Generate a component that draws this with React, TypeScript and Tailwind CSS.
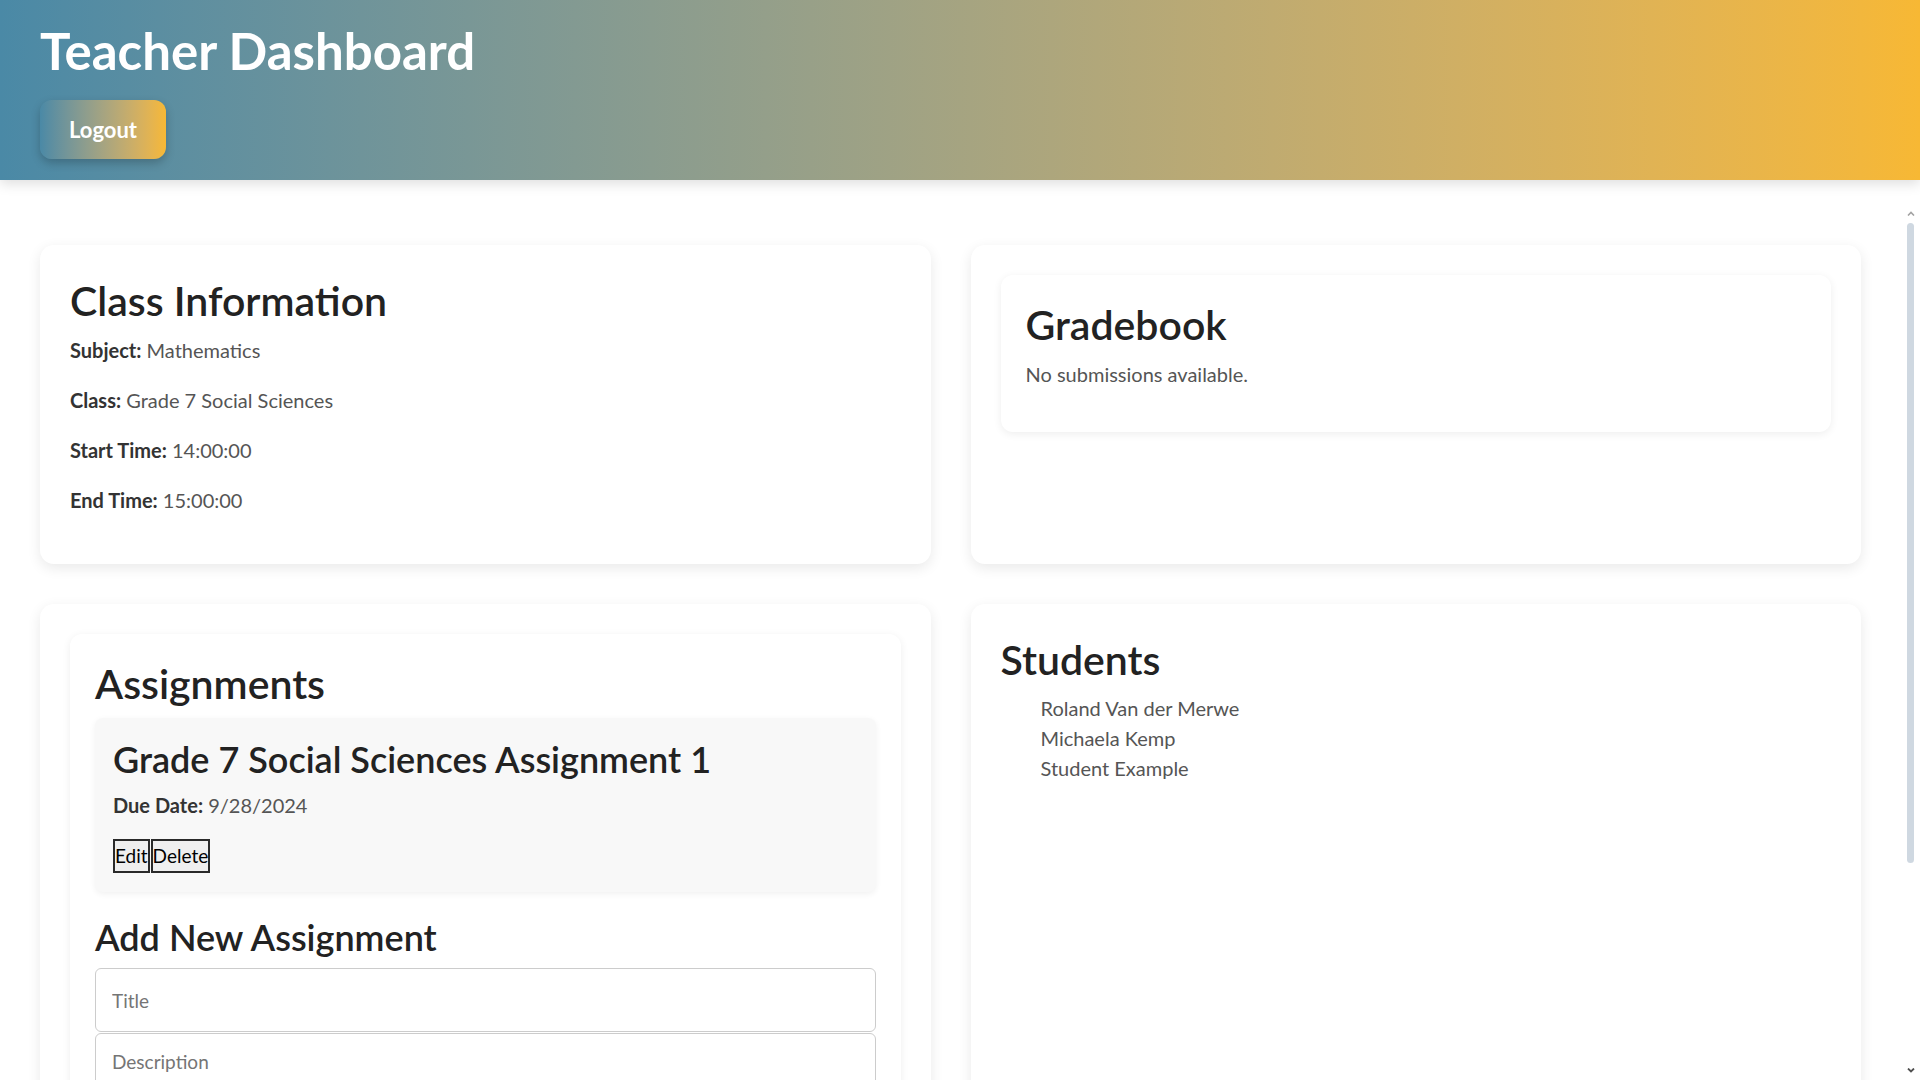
import * as React from "react"

function Card({ className = "", children }: { className?: string; children: React.ReactNode }) {
  return (
    <div className={"rounded-[14px] bg-white p-[30px] shadow-[0_4px_14px_rgba(0,0,0,0.09)] " + className}>
      {children}
    </div>
  )
}

function InnerCard({ children }: { children: React.ReactNode }) {
  return (
    <div className="rounded-[12px] bg-white px-[25px] py-6 shadow-[0_2px_8px_rgba(0,0,0,0.07)]">
      {children}
    </div>
  )
}

function Heading({ children }: { children: React.ReactNode }) {
  return <h2 className="text-[41px] leading-[52px] font-semibold text-[#222]">{children}</h2>
}

function Info({ label, value }: { label: string; value: string }) {
  return (
    <p className="mb-[18px] text-[20px] leading-[32px] text-[#555]">
      <strong className="font-bold text-[#333]">{label}</strong> {value}
    </p>
  )
}

function Scrollbar() {
  return (
    <div className="absolute top-[205px] right-[5px] bottom-0 flex w-[9px] flex-col items-center">
      <svg width="8" height="5" viewBox="0 0 8 5" className="mt-[6px]">
        <path d="M1 4.5 L4 1.5 L7 4.5" fill="none" stroke="#a3a3a3" strokeWidth="1.6" />
      </svg>
      <div className="mt-[7px] h-[640px] w-[7px] rounded-full bg-[#cfd8e1]" />
      <div className="flex-1" />
      <svg width="8" height="5" viewBox="0 0 8 5" className="mb-[7px]">
        <path d="M1 0.5 L4 3.5 L7 0.5" fill="none" stroke="#505050" strokeWidth="1.8" />
      </svg>
    </div>
  )
}

export default function App() {
  const students = ["Roland Van der Merwe", "Michaela Kemp", "Student Example"]

  return (
    <div className="relative flex h-screen flex-col overflow-hidden bg-white font-['Lato',sans-serif]">
      <header className="relative z-10 h-[180px] shrink-0 bg-linear-to-r from-[#4a89a6] to-[#f7b834] px-10 pt-[23px] shadow-[0_4px_12px_rgba(0,0,0,0.13)]">
        <h1 className="text-[51px] leading-[56px] font-bold text-white">Teacher Dashboard</h1>
        <button className="mt-[21px] flex h-[59px] w-[126px] items-center justify-center rounded-[12px] bg-linear-to-r from-[#4a89a6] to-[#f7b834] text-[22px] leading-[26px] font-bold text-white shadow-[0_4px_10px_rgba(0,0,0,0.22)]">
          Logout
        </button>
      </header>

      <main className="flex-1 overflow-hidden pt-[65px] pr-[59px] pl-10">
        <div className="grid grid-cols-2 gap-10">
          <Card>
            <Heading>Class Information</Heading>
            <div className="mt-[7px]">
              <Info label="Subject:" value="Mathematics" />
              <Info label="Class:" value="Grade 7 Social Sciences" />
              <Info label="Start Time:" value="14:00:00" />
              <Info label="End Time:" value="15:00:00" />
            </div>
          </Card>

          <Card>
            <InnerCard>
              <Heading>Gradebook</Heading>
              <p className="mt-[7px] mb-[18px] text-[20px] leading-[32px] text-[#555]">No submissions available.</p>
            </InnerCard>
          </Card>

          <Card>
            <InnerCard>
              <Heading>Assignments</Heading>
              <div className="mt-[8px] rounded-[8px] bg-[#f8f8f8] px-[18px] pt-[18px] pb-[19px] shadow-[0_2px_6px_rgba(0,0,0,0.06)]">
                <h3 className="text-[36px] leading-[46px] font-semibold text-[#222]">
                  Grade 7 Social Sciences Assignment 1
                </h3>
                <p className="mt-[7px] text-[20px] leading-[32px] text-[#555]">
                  <strong className="font-bold text-[#333]">Due Date:</strong> 9/28/2024
                </p>
                <div className="mt-[18px] flex">
                  <button className="h-[34px] border-2 border-[#2a2a2a] bg-[#efefef] px-0 text-[19px] leading-[28px] text-black">
                    Edit
                  </button>
                  <button className="ml-px h-[34px] border-2 border-[#2a2a2a] bg-[#efefef] px-0 text-[19px] leading-[28px] text-black">
                    Delete
                  </button>
                </div>
              </div>

              <div className="mt-[22px]">
                <h3 className="text-[36px] leading-[46px] font-semibold text-[#222]">Add New Assignment</h3>
                <div className="mt-[8px] flex flex-col">
                  <input
                    placeholder="Title"
                    className="h-[64px] w-full rounded-[6px] border border-[#ccc] bg-white px-4 text-[19px] text-[#333] placeholder:text-[#757575] outline-none"
                  />
                  <textarea
                    placeholder="Description"
                    className="mt-px h-[120px] w-full resize-none rounded-[6px] border border-[#ccc] bg-white px-4 py-4 text-[19px] leading-[24px] text-[#333] placeholder:text-[#757575] outline-none"
                  />
                </div>
              </div>
            </InnerCard>
          </Card>

          <Card className="min-h-[700px]">
            <Heading>Students</Heading>
            <ul className="mt-[7px] pl-10">
              {students.map((name) => (
                <li key={name} className="text-[20px] leading-[30px] text-[#555]">
                  {name}
                </li>
              ))}
            </ul>
          </Card>
        </div>
      </main>

      <Scrollbar />
    </div>
  )
}
